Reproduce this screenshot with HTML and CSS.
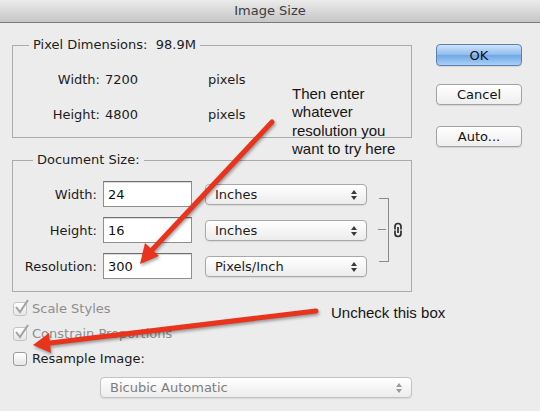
FILE: index.html
```html
<!DOCTYPE html>
<html lang="en">
<head>
  <meta charset="UTF-8" />
  <title>Image Size</title>
  <link rel="stylesheet" href="styles.css">
</head>
<body>

  <div class="titlebar">Image Size</div>

  <div class="dialog">
    <div class="main">
      <fieldset class="group pixels">
        <legend>Pixel Dimensions:&nbsp;&nbsp;98.9M</legend>
        <div class="pixel-grid">
          <span class="lbl">Width:</span><span class="val">7200</span><span>pixels</span>
          <span class="lbl">Height:</span><span class="val">4800</span><span>pixels</span>
        </div>
      </fieldset>

      <fieldset class="group docsize">
        <legend>Document Size:</legend>
        <div class="doc-grid">
          <label class="lbl" for="docWidth">Width:</label>
          <input class="field" type="text" id="docWidth" value="24" />
          <div class="popup">Inches<span class="updown"></span></div>

          <label class="lbl" for="docHeight">Height:</label>
          <input class="field" type="text" id="docHeight" value="16" />
          <div class="popup">Inches<span class="updown"></span></div>

          <label class="lbl" for="docRes">Resolution:</label>
          <input class="field" type="text" id="docRes" value="300" />
          <div class="popup">Pixels/Inch<span class="updown"></span></div>

          <div class="bracket"></div>
          <svg class="chain" width="10" height="16" viewBox="0 0 10 16">
            <path d="M2 7.5 V4.5 a3 3 0 0 1 6 0 V7.5" fill="none" stroke="#2e2e2e" stroke-width="1.7"/>
            <path d="M2 8.5 V11.5 a3 3 0 0 0 6 0 V8.5" fill="none" stroke="#2e2e2e" stroke-width="1.7"/>
            <line x1="5" y1="5" x2="5" y2="11" stroke="#2e2e2e" stroke-width="1.7"/>
          </svg>
        </div>
      </fieldset>

      <div class="checks">
        <div class="check-row disabled">
          <span class="box"><svg width="16" height="16" viewBox="0 0 16 16"><path d="M2 8 L6 13 L14 1" fill="none" stroke="#a2a2a2" stroke-width="2"/></svg></span>
          Scale Styles
        </div>
        <div class="check-row disabled">
          <span class="box"><svg width="16" height="16" viewBox="0 0 16 16"><path d="M2 8 L6 13 L14 1" fill="none" stroke="#a2a2a2" stroke-width="2"/></svg></span>
          Constrain Proportions
        </div>
        <div class="check-row">
          <span class="box"></span>
          Resample Image:
        </div>
      </div>

      <div class="popup wide disabled">Bicubic Automatic<span class="updown"></span></div>
    </div>

    <div class="buttons">
      <button class="btn default" type="button">OK</button>
      <button class="btn" type="button">Cancel</button>
      <button class="btn auto" type="button">Auto...</button>
    </div>
  </div>

  <!-- annotations drawn over the dialog -->
  <div class="note note-res">Then enter<br>whatever<br>resolution you<br>want to try here</div>
  <div class="note note-box">Uncheck this box</div>

  <svg class="arrows" width="540" height="411" viewBox="0 0 540 411">
    <line x1="272" y1="122" x2="152" y2="250" stroke="#e8341c" stroke-width="5" stroke-linecap="round"/>
    <polygon points="140,264 159,256 145,243" fill="#e8341c"/>
    <line x1="316" y1="311" x2="50" y2="343" stroke="#e8341c" stroke-width="5" stroke-linecap="round"/>
    <polygon points="33,345 51,353 49,333" fill="#e8341c"/>
  </svg>

</body>
</html>
```

FILE: styles.css
```css
body {
  margin: 0;
  width: 540px;
  height: 411px;
  overflow: hidden;
  position: relative;
  background: #ececec;
  font-family: 'DejaVu Sans', sans-serif;
  font-size: 13px;
  color: #1c1c1c;
}

.titlebar {
  height: 22px;
  line-height: 22px;
  text-align: center;
  color: #3c3c3c;
  background: linear-gradient(#ebebeb, #c6c6c6);
  border-bottom: 1px solid #7b7b7b;
}

.dialog {
  display: flex;
  align-items: flex-start;
}

.main {
  width: 400px;
  margin-left: 12px;
  margin-top: 14px;
}

.group {
  margin: 0;
  padding: 0;
  border: 1px solid #ababab;
  min-width: 0;
}

.group legend {
  padding: 0 4px;
  margin-left: 16px;
  line-height: 16px;
}

.pixels {
  padding: 19px 0 14px;
}

.docsize {
  margin-top: 14px;
  padding: 13px 0 12px;
}

.docsize legend {
  margin-left: 20px;
}

.pixel-grid {
  display: grid;
  grid-template-columns: 87px 108px auto;
  grid-auto-rows: 16px;
  row-gap: 19px;
  line-height: 16px;
}

.lbl {
  text-align: right;
}

.val {
  padding-left: 5px;
}

.doc-grid {
  display: grid;
  grid-template-columns: 84px 95px 175px 22px 14px;
  grid-template-rows: 26px 26px 26px;
  row-gap: 10px;
  align-items: center;
}

.field {
  justify-self: end;
  box-sizing: border-box;
  width: 89px;
  height: 26px;
  margin: 0;
  padding: 0 4px;
  border: 1px solid #8f8f8f;
  border-top-color: #6f6f6f;
  background: #fff;
  box-shadow: inset 0 1px 1px rgba(0,0,0,0.15);
  font-family: 'DejaVu Sans', sans-serif;
  font-size: 13px;
  color: #111;
  outline: none;
}

.popup {
  justify-self: end;
  position: relative;
  box-sizing: border-box;
  width: 162px;
  height: 21px;
  line-height: 19px;
  padding-left: 9px;
  border: 1px solid #a8a8a8;
  border-radius: 4px;
  background: linear-gradient(#ffffff, #ececec);
  box-shadow: 0 1px 1px rgba(0,0,0,0.08);
}

.updown {
  position: absolute;
  right: 9px;
  top: 5px;
  width: 0;
  height: 0;
  border-left: 3px solid transparent;
  border-right: 3px solid transparent;
  border-bottom: 4px solid #3a3a3a;
}

.updown::after {
  content: "";
  position: absolute;
  left: -3px;
  top: 6px;
  border-left: 3px solid transparent;
  border-right: 3px solid transparent;
  border-top: 4px solid #3a3a3a;
}

.bracket {
  grid-column: 4;
  grid-row: 1 / 4;
  justify-self: end;
  align-self: center;
  position: relative;
  width: 9px;
  height: 62px;
  border: 1px solid #8a8a8a;
  border-left: none;
}

.bracket::after {
  content: "";
  position: absolute;
  left: -1px;
  top: 30px;
  width: 8px;
  border-top: 1px solid #8a8a8a;
}

.chain {
  grid-column: 5;
  grid-row: 1 / 4;
  justify-self: end;
  align-self: center;
}

.checks {
  margin-top: 4px;
}

.check-row {
  display: flex;
  align-items: center;
  height: 25px;
  padding-left: 1px;
}

.check-row.disabled {
  color: #8e8e8e;
}

.box {
  position: relative;
  box-sizing: border-box;
  width: 14px;
  height: 14px;
  margin-right: 5px;
  border: 1px solid #9c9c9c;
  border-radius: 3px;
  background: linear-gradient(#ffffff, #e6e6e6);
}

.disabled .box {
  border-color: #c4c4c4;
}

.box svg {
  position: absolute;
  left: 0;
  top: -4px;
}

.popup.wide {
  margin-left: 85px;
  margin-top: 6px;
  width: 312px;
}

.popup.disabled {
  color: #7d7d7d;
  border-color: #c2c2c2;
}

.popup.disabled .updown {
  border-bottom-color: #9a9a9a;
}

.popup.disabled .updown::after {
  border-top-color: #9a9a9a;
}

.buttons {
  display: flex;
  flex-direction: column;
  margin-left: 24px;
  margin-top: 21px;
}

.btn {
  width: 86px;
  height: 21px;
  padding: 0;
  border: 1px solid #a3a3a3;
  border-radius: 4px;
  background: linear-gradient(#ffffff, #eeeeee);
  box-shadow: 0 1px 1px rgba(0,0,0,0.1);
  font-family: 'DejaVu Sans', sans-serif;
  font-size: 13px;
  color: #111;
  margin-top: 18px;
}

.btn.default {
  height: 22px;
  margin-top: 0;
  border-color: #5c81b3;
  background: linear-gradient(#cfe3f9, #8ebbee 50%, #6fa7e6 51%, #a8d0f6);
}

.btn.auto {
  margin-top: 21px;
}

.note {
  position: absolute;
  font-family: 'Liberation Sans', Arial, sans-serif;
  font-size: 15px;
  line-height: 18.3px;
  color: #151515;
}

.note-res {
  left: 292px;
  top: 85px;
}

.note-box {
  left: 331px;
  top: 304px;
}

.arrows {
  position: absolute;
  left: 0;
  top: 0;
  pointer-events: none;
  filter: drop-shadow(1px 2px 1.5px rgba(0,0,0,0.35));
}
```
